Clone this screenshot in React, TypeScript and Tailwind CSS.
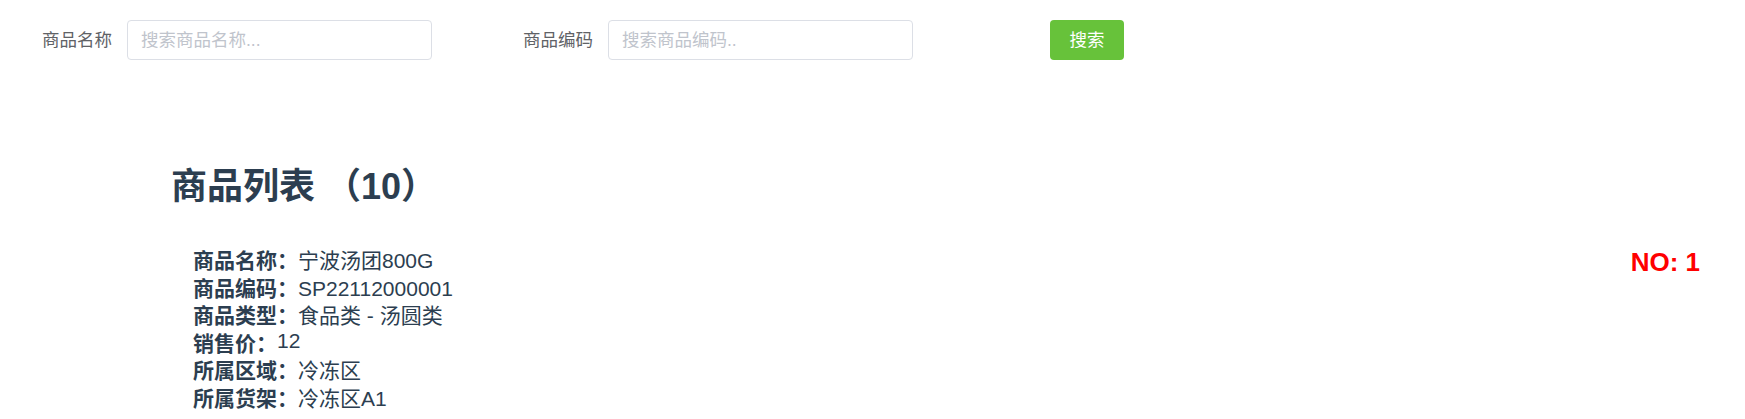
import React, { useState } from "react";

interface Goods {
  no: number;
  name: string;
  code: string;
  type: string;
  price: string;
  area: string;
  shelf: string;
}

const goods: Goods[] = [
  {
    no: 1,
    name: "宁波汤团800G",
    code: "SP22112000001",
    type: "食品类 - 汤圆类",
    price: "12",
    area: "冷冻区",
    shelf: "冷冻区A1",
  },
];

const font = "font-['Liberation_Sans','Noto_Sans_CJK_SC',sans-serif]";

const App: React.FC = () => {
  const [name, setName] = useState<string>("");
  const [code, setCode] = useState<string>("");

  const rows = (g: Goods) => [
    { label: "商品名称：", value: g.name },
    { label: "商品编码：", value: g.code },
    { label: "商品类型：", value: g.type },
    { label: "销售价：", value: g.price, raise: true },
    { label: "所属区域：", value: g.area },
    { label: "所属货架：", value: g.shelf },
  ];

  return (
    <div className={"min-h-screen bg-white " + font}>
      {/* search bar */}
      <div className="flex items-center pl-[42px] pt-[20px]">
        <label className="text-[17.5px] text-[#606266] mr-[15px]">商品名称</label>
        <input
          value={name}
          onChange={(e) => setName(e.target.value)}
          placeholder="搜索商品名称..."
          className="w-[305px] h-[40px] rounded-[4px] border border-[#dcdfe6] pl-[13px] text-[17.5px] text-[#606266] outline-none placeholder:text-[#c0c4cc]"
        />
        <label className="text-[17.5px] text-[#606266] ml-[91px] mr-[15px]">商品编码</label>
        <input
          value={code}
          onChange={(e) => setCode(e.target.value)}
          placeholder="搜索商品编码.."
          className="w-[305px] h-[40px] rounded-[4px] border border-[#dcdfe6] pl-[13px] text-[17.5px] text-[#606266] outline-none placeholder:text-[#c0c4cc]"
        />
        <button className="ml-[137px] w-[74px] h-[40px] rounded-[4px] bg-[#67c23a] text-white text-[17.5px]">
          搜索
        </button>
      </div>

      {/* list */}
      <div className="pl-[171px] pr-[45px] pt-[101px] text-[#2c3e50]">
        <h2 className="text-[36px] font-bold leading-[52px]">商品列表 （{goods.length * 10}）</h2>
        {goods.map((g) => (
          <div key={g.no} className="flex justify-between mt-[34px]">
            <div className="pl-[22px]">
              {rows(g).map((r, i) => (
                <div key={i} className="flex items-start text-[21px] leading-[27.5px]">
                  <b className="font-bold">{r.label}</b>
                  <span className={r.raise ? "-mt-[3px]" : ""}>{r.value}</span>
                </div>
              ))}
            </div>
            <div className="text-[26px] font-bold text-[#ff0000] leading-[30px]">NO: {g.no}</div>
          </div>
        ))}
      </div>
    </div>
  );
};

export default App;
